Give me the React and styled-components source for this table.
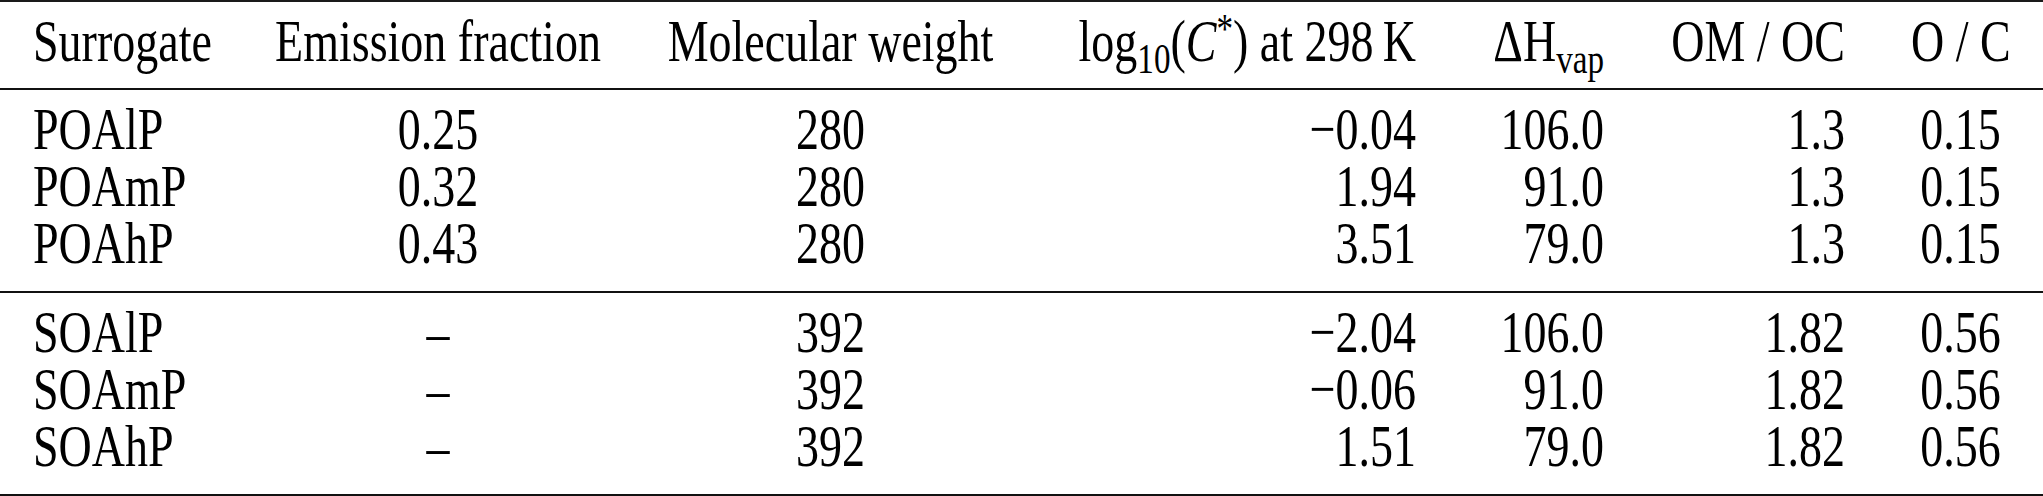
import React from "react";
import styled, { createGlobalStyle } from "styled-components";

const Global = createGlobalStyle`
  html, body { margin: 0; padding: 0; background: #fff; }
  #root { width: 2043px; }
`;

const Table = styled.table`
  width: 2043px;
  table-layout: fixed;
  border-collapse: collapse;
  font-family: "Liberation Serif", "Times New Roman", serif;
  font-size: 46px;
  line-height: 57px;
  color: #000;
`;

const Head = styled.thead`
  border-top: 2px solid #1a1a1a;
  border-bottom: 2px solid #111;
`;

const Body = styled.tbody`
  border-bottom: 2px solid #111;
`;

const Cell = styled.td`
  padding: ${(p) => (p.$first ? "11px" : "0")} 33px ${(p) => (p.$last ? "19px" : "0")};
  text-align: ${(p) => p.$align || "left"};
  white-space: nowrap;
  font-weight: normal;
`;

const HeadCell = styled.th`
  padding: 11px 33px 18px;
  text-align: ${(p) => p.$align || "left"};
  white-space: nowrap;
  font-weight: normal;
`;

/* the reference glyphs are drawn taller than their width would suggest */
const Glyphs = styled.span`
  display: inline-block;
  transform: scaleY(1.3);
  transform-origin: 50% 52%;
`;

const Sub = styled.sub`
  font-size: 0.72em;
  vertical-align: -0.28em;
  line-height: 0;
`;

const Sup = styled.sup`
  font-size: 0.72em;
  vertical-align: 0.42em;
  line-height: 0;
`;

const Italic = styled.i`
  font-style: italic;
`;

const cols = [242, 392, 393, 422, 188, 241, 165];
const aligns = ["left", "center", "center", "right", "right", "right", "center"];

const groups = [
  [
    ["POAlP", "0.25", "280", "\u22120.04", "106.0", "1.3", "0.15"],
    ["POAmP", "0.32", "280", "1.94", "91.0", "1.3", "0.15"],
    ["POAhP", "0.43", "280", "3.51", "79.0", "1.3", "0.15"],
  ],
  [
    ["SOAlP", "\u2013", "392", "\u22122.04", "106.0", "1.82", "0.56"],
    ["SOAmP", "\u2013", "392", "\u22120.06", "91.0", "1.82", "0.56"],
    ["SOAhP", "\u2013", "392", "1.51", "79.0", "1.82", "0.56"],
  ],
];

const headers = [
  "Surrogate",
  "Emission fraction",
  "Molecular weight",
  <>
    log<Sub>10</Sub>(<Italic>C</Italic>
    <Sup>*</Sup>) at 298{"\u2009"}K
  </>,
  <>
    {"\u0394"}H<Sub>vap</Sub>
  </>,
  "OM / OC",
  "O / C",
];

export default function App() {
  return (
    <>
      <Global />
      <Table>
        <colgroup>
          {cols.map((w, i) => (
            <col key={i} style={{ width: w }} />
          ))}
        </colgroup>
        <Head>
          <tr>
            {headers.map((h, i) => (
              <HeadCell key={i} $align={aligns[i]}>
                <Glyphs>{h}</Glyphs>
              </HeadCell>
            ))}
          </tr>
        </Head>
        {groups.map((rows, gi) => (
          <Body key={gi}>
            {rows.map((r, ri) => (
              <tr key={ri}>
                {r.map((v, ci) => (
                  <Cell
                    key={ci}
                    $align={aligns[ci]}
                    $first={ri === 0}
                    $last={ri === rows.length - 1}
                  >
                    <Glyphs>{v}</Glyphs>
                  </Cell>
                ))}
              </tr>
            ))}
          </Body>
        ))}
      </Table>
    </>
  );
}
